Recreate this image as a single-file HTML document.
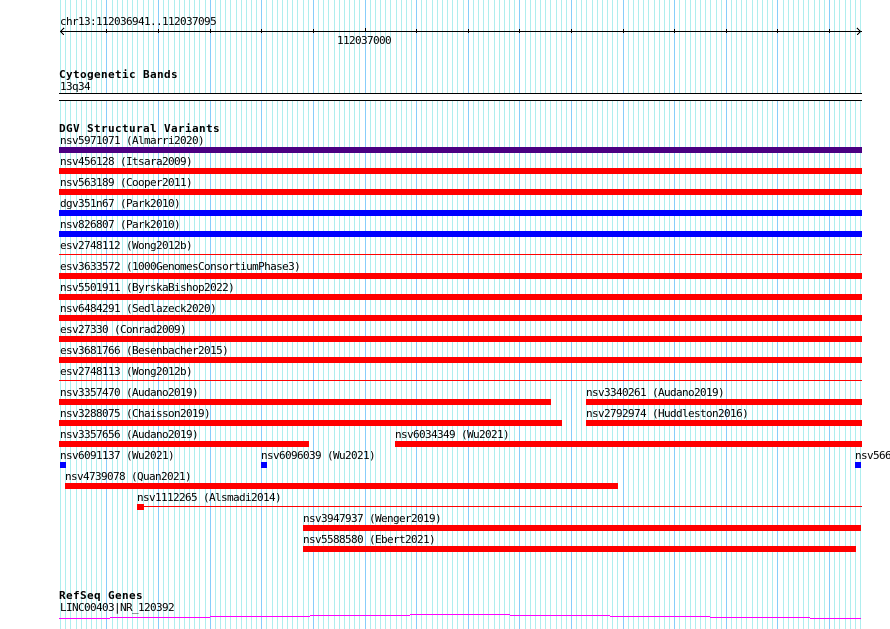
<!DOCTYPE html>
<html>
<head>
<meta charset="utf-8">
<title>chr13:112036941..112037095</title>
<style>
html,body{margin:0;padding:0;background:#fff;width:890px;height:629px;overflow:hidden}
svg{display:block;position:absolute;left:0;top:0}
text{font-family:"DejaVu Sans Mono","Liberation Mono",monospace;font-size:11px;letter-spacing:-0.62px;fill:#000;white-space:pre}
text.b{font-weight:bold;font-size:11px;letter-spacing:0.38px}
</style>
</head>
<body>
<svg width="890" height="629" viewBox="0 0 890 629" xmlns="http://www.w3.org/2000/svg" shape-rendering="crispEdges">
<path fill="none" stroke="#afeeee" stroke-width="1" d="M60.5 0v629M65.5 0v629M70.5 0v629M76.5 0v629M81.5 0v629M86.5 0v629M91.5 0v629M96.5 0v629M101.5 0v629M112.5 0v629M117.5 0v629M122.5 0v629M127.5 0v629M132.5 0v629M137.5 0v629M143.5 0v629M148.5 0v629M153.5 0v629M163.5 0v629M168.5 0v629M174.5 0v629M179.5 0v629M184.5 0v629M189.5 0v629M194.5 0v629M199.5 0v629M205.5 0v629M215.5 0v629M220.5 0v629M225.5 0v629M230.5 0v629M236.5 0v629M241.5 0v629M246.5 0v629M251.5 0v629M256.5 0v629M266.5 0v629M272.5 0v629M277.5 0v629M282.5 0v629M287.5 0v629M292.5 0v629M297.5 0v629M303.5 0v629M308.5 0v629M318.5 0v629M323.5 0v629M328.5 0v629M334.5 0v629M339.5 0v629M344.5 0v629M349.5 0v629M354.5 0v629M359.5 0v629M370.5 0v629M375.5 0v629M380.5 0v629M385.5 0v629M390.5 0v629M396.5 0v629M401.5 0v629M406.5 0v629M411.5 0v629M421.5 0v629M426.5 0v629M432.5 0v629M437.5 0v629M442.5 0v629M447.5 0v629M452.5 0v629M457.5 0v629M463.5 0v629M473.5 0v629M478.5 0v629M483.5 0v629M488.5 0v629M494.5 0v629M499.5 0v629M504.5 0v629M509.5 0v629M514.5 0v629M525.5 0v629M530.5 0v629M535.5 0v629M540.5 0v629M545.5 0v629M550.5 0v629M556.5 0v629M561.5 0v629M566.5 0v629M576.5 0v629M581.5 0v629M586.5 0v629M592.5 0v629M597.5 0v629M602.5 0v629M607.5 0v629M612.5 0v629M617.5 0v629M628.5 0v629M633.5 0v629M638.5 0v629M643.5 0v629M648.5 0v629M654.5 0v629M659.5 0v629M664.5 0v629M669.5 0v629M679.5 0v629M685.5 0v629M690.5 0v629M695.5 0v629M700.5 0v629M705.5 0v629M710.5 0v629M716.5 0v629M721.5 0v629M731.5 0v629M736.5 0v629M741.5 0v629M746.5 0v629M752.5 0v629M757.5 0v629M762.5 0v629M767.5 0v629M772.5 0v629M783.5 0v629M788.5 0v629M793.5 0v629M798.5 0v629M803.5 0v629M808.5 0v629M814.5 0v629M819.5 0v629M824.5 0v629M834.5 0v629M839.5 0v629M845.5 0v629M850.5 0v629M855.5 0v629M860.5 0v629"/>
<path fill="none" stroke="#87cefa" stroke-width="1" d="M106.5 0v629M158.5 0v629M210.5 0v629M261.5 0v629M313.5 0v629M365.5 0v629M416.5 0v629M468.5 0v629M519.5 0v629M571.5 0v629M623.5 0v629M674.5 0v629M726.5 0v629M777.5 0v629M829.5 0v629"/>

<!-- ruler -->
<path fill="none" stroke="#000" stroke-width="1" d="M60 31.5H862M106.5 29v4M158.5 29v4M210.5 29v4M261.5 29v4M313.5 29v4M365.5 28v4M416.5 29v4M468.5 29v4M519.5 29v4M571.5 29v4M623.5 29v4M674.5 29v4M726.5 29v4M777.5 29v4M829.5 29v4"/>
<path fill="none" stroke="#000" stroke-width="1" d="M64 28L60.5 31.5L64 35M857 28L860.5 31.5L857 35"/>
<text x="60" y="25">chr13:112036941..112037095</text>
<text x="337" y="44">112037000</text>

<!-- cytoband -->
<rect x="59" y="93" width="803" height="8" fill="#fff"/>
<rect x="59" y="93" width="803" height="1" fill="#000"/>
<rect x="59" y="100" width="803" height="1" fill="#000"/>
<text class="b" x="59" y="78">Cytogenetic Bands</text>
<text x="60" y="90">13q34</text>

<!-- DGV -->
<text class="b" x="59" y="132">DGV Structural Variants</text>
<text x="60" y="144">nsv5971071 (Almarri2020)</text>
<rect x="59" y="147" width="803" height="6" fill="#4b0082"/>
<text x="60" y="165">nsv456128 (Itsara2009)</text>
<rect x="59" y="168" width="803" height="6" fill="#f00"/>
<text x="60" y="186">nsv563189 (Cooper2011)</text>
<rect x="59" y="189" width="803" height="6" fill="#f00"/>
<text x="60" y="207">dgv351n67 (Park2010)</text>
<rect x="59" y="210" width="803" height="6" fill="#00f"/>
<text x="60" y="228">nsv826807 (Park2010)</text>
<rect x="59" y="231" width="803" height="6" fill="#00f"/>
<text x="60" y="249">esv2748112 (Wong2012b)</text>
<rect x="59" y="254" width="803" height="1" fill="#f00"/>
<text x="60" y="270">esv3633572 (1000GenomesConsortiumPhase3)</text>
<rect x="59" y="273" width="803" height="6" fill="#f00"/>
<text x="60" y="291">nsv5501911 (ByrskaBishop2022)</text>
<rect x="59" y="294" width="803" height="6" fill="#f00"/>
<text x="60" y="312">nsv6484291 (Sedlazeck2020)</text>
<rect x="59" y="315" width="803" height="6" fill="#f00"/>
<text x="60" y="333">esv27330 (Conrad2009)</text>
<rect x="59" y="336" width="803" height="6" fill="#f00"/>
<text x="60" y="354">esv3681766 (Besenbacher2015)</text>
<rect x="59" y="357" width="803" height="6" fill="#f00"/>
<text x="60" y="375">esv2748113 (Wong2012b)</text>
<rect x="59" y="380" width="803" height="1" fill="#f00"/>
<text x="60" y="396">nsv3357470 (Audano2019)</text>
<rect x="59" y="399" width="492" height="6" fill="#f00"/>
<text x="586" y="396">nsv3340261 (Audano2019)</text>
<rect x="586" y="399" width="276" height="6" fill="#f00"/>
<text x="60" y="417">nsv3288075 (Chaisson2019)</text>
<rect x="59" y="420" width="503" height="6" fill="#f00"/>
<text x="586" y="417">nsv2792974 (Huddleston2016)</text>
<rect x="586" y="420" width="276" height="6" fill="#f00"/>
<text x="60" y="438">nsv3357656 (Audano2019)</text>
<rect x="59" y="441" width="250" height="6" fill="#f00"/>
<text x="395" y="438">nsv6034349 (Wu2021)</text>
<rect x="395" y="441" width="467" height="6" fill="#f00"/>
<text x="60" y="459">nsv6091137 (Wu2021)</text>
<rect x="60" y="462" width="6" height="6" fill="#00f"/>
<text x="261" y="459">nsv6096039 (Wu2021)</text>
<rect x="261" y="462" width="6" height="6" fill="#00f"/>
<text x="855" y="459">nsv566</text>
<rect x="855" y="462" width="6" height="6" fill="#00f"/>
<text x="65" y="480">nsv4739078 (Quan2021)</text>
<rect x="65" y="483" width="553" height="6" fill="#f00"/>
<text x="137" y="501">nsv1112265 (Alsmadi2014)</text>
<rect x="137" y="504" width="7" height="6" fill="#f00"/>
<rect x="144" y="506" width="718" height="1" fill="#f00"/>
<text x="303" y="522">nsv3947937 (Wenger2019)</text>
<rect x="303" y="525" width="558" height="6" fill="#f00"/>
<text x="303" y="543">nsv5588580 (Ebert2021)</text>
<rect x="303" y="546" width="553" height="6" fill="#f00"/>

<!-- RefSeq -->
<text class="b" x="59" y="599">RefSeq Genes</text>
<text x="60" y="611">LINC00403|NR_120392</text>
<path fill="none" stroke="#f0f" stroke-width="1" d="M59 618.5H110M110 617.5H210M210 616.5H310M310 615.5H410M410 614.5H510M510 615.5H610M610 616.5H710M710 617.5H810M810 618.5H861"/>
</svg>
</body>
</html>
